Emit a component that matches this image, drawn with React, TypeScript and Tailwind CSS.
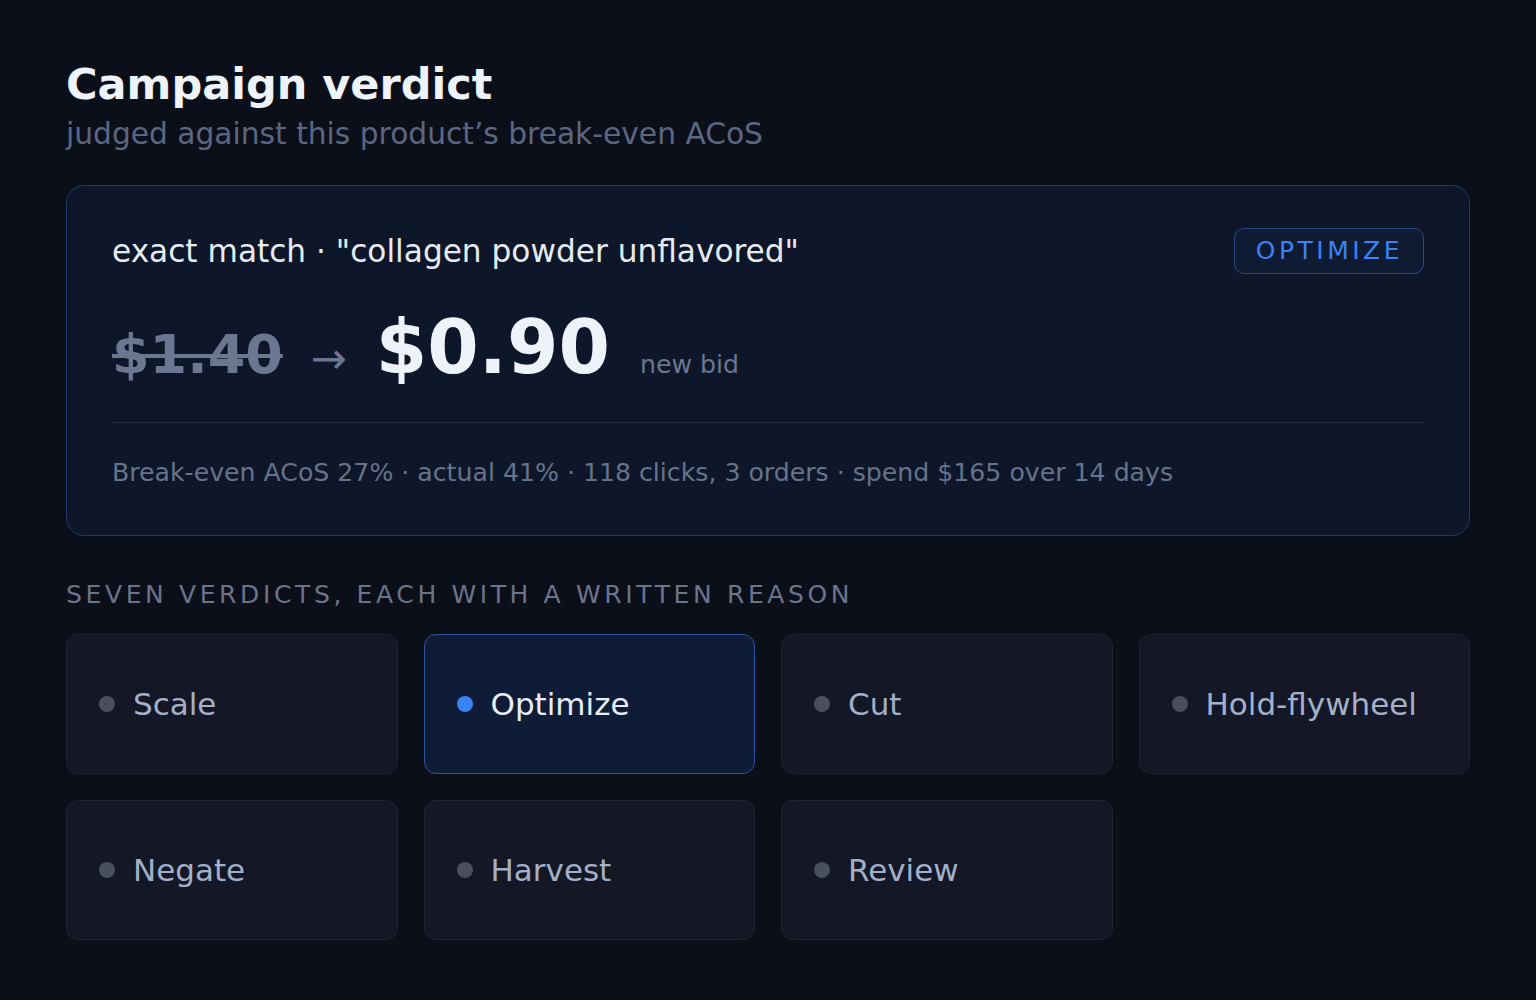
import React from "react";

const verdicts = [
  { name: "Scale", active: false },
  { name: "Optimize", active: true },
  { name: "Cut", active: false },
  { name: "Hold-flywheel", active: false },
  { name: "Negate", active: false },
  { name: "Harvest", active: false },
  { name: "Review", active: false },
];

const VerdictCard: React.FC<{ name: string; active: boolean }> = ({ name, active }) => (
  <div
    className={
      active
        ? "h-[140px] flex items-center gap-[18px] pl-[32px] rounded-[12px] border border-[#2d5597] bg-[#0f1c38]"
        : "h-[140px] flex items-center gap-[18px] pl-[32px] rounded-[12px] border border-[#1f2434] bg-[#131726]"
    }
  >
    <span
      className={
        active
          ? "w-[16px] h-[16px] rounded-full bg-[#3b82f6] shrink-0"
          : "w-[16px] h-[16px] rounded-full bg-[#4a4f5c] shrink-0"
      }
    />
    <span
      className={
        active
          ? "text-[31px] leading-[1.2] text-[#e8eef8]"
          : "text-[31px] leading-[1.2] text-[#a3b0c6]"
      }
    >
      {name}
    </span>
  </div>
);

export default function App() {
  return (
    <div
      className="min-h-[1000px] bg-[#0b0f1a] px-[66px] pt-[59px]"
      style={{ fontFamily: '"DejaVu Sans", sans-serif' }}
    >
      <h1 className="text-[43px] leading-[1.2] font-bold text-[#eef2f9]">Campaign verdict</h1>
      <p className="mt-[5px] text-[29.7px] leading-[1.2] text-[#5b6780]">
        judged against this product’s break-even ACoS
      </p>

      <div className="mt-[34px] rounded-[18px] border border-[#21396a] bg-[#0e1629] px-[45px] pt-[42px] pb-[47px]">
        <div className="flex items-center justify-between">
          <div className="text-[31.2px] leading-[1.2] text-[#e6ebf2]">
            exact match · "collagen powder unflavored"
          </div>
          <div className="h-[46px] flex items-center rounded-[10px] border border-[#2a4a85] bg-[#0f1a33] pl-[21px] pr-[20px] text-[25px] leading-[30px] tracking-[0.14em] text-[#3b82f6]">
            OPTIMIZE
          </div>
        </div>

        <div className="mt-[36px] flex items-baseline">
          <span className="text-[54px] leading-none font-bold text-[#6b7790] line-through decoration-[4px]">
            $1.40
          </span>
          <span className="ml-[28px] text-[43px] leading-none text-[#6b7790]">→</span>
          <span className="ml-[29px] text-[74px] leading-none font-bold text-[#eef2f9]">$0.90</span>
          <span className="ml-[30px] text-[25.2px] leading-none text-[#6b7790]">new bid</span>
        </div>

        <div className="mt-[38px] h-px bg-[#1c2940]" />

        <div className="mt-[35px] text-[25.2px] leading-[1.2] text-[#66738a]">
          Break-even ACoS 27% · actual 41% · 118 clicks, 3 orders · spend $165 over 14 days
        </div>
      </div>

      <div className="mt-[44px] text-[25px] leading-[1.2] tracking-[0.145em] text-[#6b7489]">
        SEVEN VERDICTS, EACH WITH A WRITTEN REASON
      </div>

      <div className="mt-[24px] grid grid-cols-4 gap-[26px]">
        {verdicts.map((v) => (
          <VerdictCard key={v.name} name={v.name} active={v.active} />
        ))}
      </div>
    </div>
  );
}
